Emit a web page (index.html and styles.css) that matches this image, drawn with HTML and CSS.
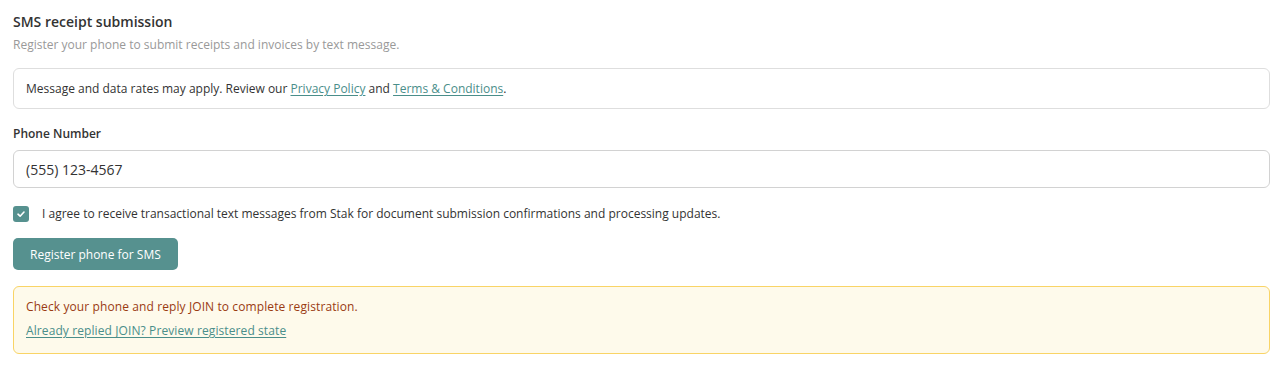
FILE: index.html
```html
<!DOCTYPE html>
<html lang="en">
<head>
<meta charset="utf-8">
<title>SMS receipt submission</title>
<link rel="stylesheet" href="styles.css">
</head>
<body>
<section class="panel">
  <header class="head">
    <h2 class="title">SMS receipt submission</h2>
    <p class="subtitle">Register your phone to submit receipts and invoices by text message.</p>
  </header>
  <div class="notice">Message and data rates may apply. Review our <a href="#">Privacy Policy</a> and <a href="#">Terms &amp; Conditions</a>.</div>
  <div class="field">
    <label class="label" for="phone">Phone Number</label>
    <input class="input" id="phone" type="text" value="(555) 123-4567">
  </div>
  <label class="consent">
    <span class="check"><svg width="10" height="10" viewBox="0 0 10 10"><path d="M2 5.2 L4.1 7.2 L8 3" fill="none" stroke="#fff" stroke-width="1.6" stroke-linecap="round" stroke-linejoin="round"/></svg></span>
    <span class="consent-text">I agree to receive transactional text messages from Stak for document submission confirmations and processing updates.</span>
  </label>
  <div class="actions"><button class="btn" type="button">Register phone for SMS</button></div>
  <div class="pending">
    <p class="pending-msg">Check your phone and reply JOIN to complete registration.</p>
    <a class="pending-link" href="#">Already replied JOIN? Preview registered state</a>
  </div>
</section>
</body>
</html>
```
FILE: styles.css
```css
* { box-sizing: border-box; }
html, body { margin: 0; background: #fff; }
body { font-family: "Open Sans", "Noto Sans", sans-serif; color: #333; }
.panel { padding: 12px 11px 12px 13px; display: flex; flex-direction: column; }
.head { margin-bottom: 15px; }
.title { margin: 0; font-size: 14px; font-weight: 600; line-height: 20px; color: #333; }
.subtitle { margin: 4px 0 0; font-size: 12px; line-height: 17px; color: #999; }
.notice { border: 1px solid #dedede; border-radius: 6px; padding: 10px 12px; font-size: 12px; line-height: 19px; color: #333; }
.notice a, .pending-link { color: #4a8e8a; text-decoration: underline; text-underline-offset: 2px; }
.field { margin-top: 16px; display: flex; flex-direction: column; }
.label { font-size: 12px; font-weight: 600; line-height: 17px; color: #333; margin-bottom: 8px; }
.input { height: 38px; border: 1px solid #d2d2d2; border-radius: 6px; padding: 0 12px; font-family: inherit; font-size: 14px; color: #333; background: #fff; outline: none; }
.consent { margin-top: 17px; display: flex; align-items: center; gap: 13px; }
.check { width: 16px; height: 16px; border-radius: 3px; background: #56918f; display: flex; align-items: center; justify-content: center; flex: none; }
.consent-text { font-size: 12px; line-height: 17px; color: #333; }
.actions { margin-top: 16px; display: flex; }
.btn { height: 32px; padding: 0 17px; border: 0; border-radius: 5px; background: #56918f; color: #fff; font-family: inherit; font-size: 12px; }
.pending { margin-top: 16px; background: #fefaeb; border: 1px solid #f9d466; border-radius: 6px; padding: 11px 12px 13px; }
.pending-msg { margin: 0; font-size: 12px; line-height: 18px; color: #9a3b12; letter-spacing: 0.1px; }
.pending-link { display: inline-block; margin-top: 6px; font-size: 12px; line-height: 17px; letter-spacing: 0.1px; }
```
